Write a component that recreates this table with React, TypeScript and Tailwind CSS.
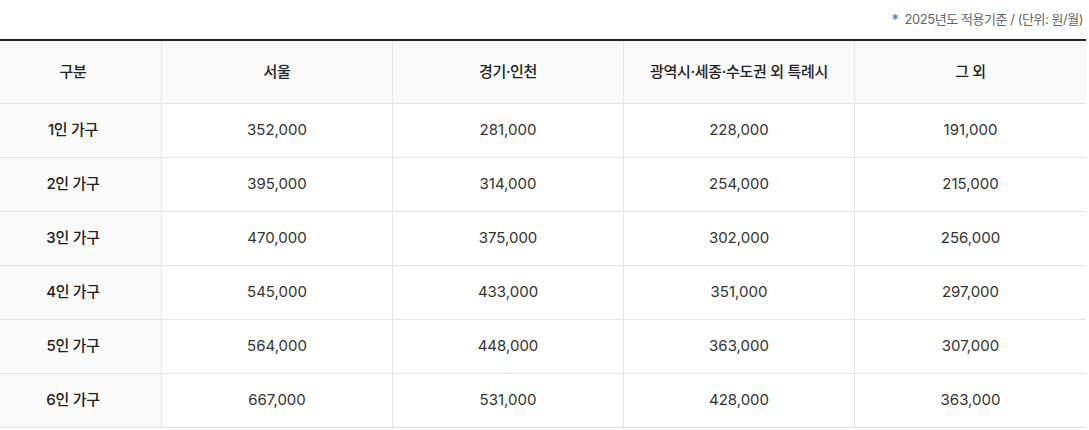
import React from "react";

const rows = [
  ["1인 가구", "352,000", "281,000", "228,000", "191,000"],
  ["2인 가구", "395,000", "314,000", "254,000", "215,000"],
  ["3인 가구", "470,000", "375,000", "302,000", "256,000"],
  ["4인 가구", "545,000", "433,000", "351,000", "297,000"],
  ["5인 가구", "564,000", "448,000", "363,000", "307,000"],
  ["6인 가구", "667,000", "531,000", "428,000", "363,000"],
];

const headers = ["구분", "서울", "경기·인천", "광역시·세종·수도권 외 특례시", "그 외"];

export default function App() {
  return (
    <div
      className="w-[1089px] h-[430px] bg-white overflow-hidden"
      style={{ fontFamily: '"Inter", "Noto Sans CJK KR", sans-serif' }}
    >
      <div className="w-[1086px]">
        <div className="h-[39px] flex items-center justify-end pr-[3px] text-[13px] text-[#666] tracking-[-0.45px]">
          <span className="text-[#4a88e0] mr-[6px] text-[14px] font-bold">*</span>
          <span>2025년도 적용기준 / (단위: 원/월)</span>
        </div>
        <div className="border-t-2 border-[#222]">
          <div className="grid grid-cols-[162px_231px_231px_231px_231px]">
            {headers.map((h, i) => (
              <div
                key={h}
                className={`h-[63px] flex items-center justify-center bg-[#fafafa] border-b border-[#e5e5e5] text-[15px] font-medium text-[#222] tracking-[-0.3px] ${
                  i < 4 ? "border-r" : ""
                } ${i === 0 ? "pr-[15px]" : ""}`}
              >
                {h}
              </div>
            ))}
            {rows.map((r) =>
              r.map((c, i) => (
                <div
                  key={r[0] + i}
                  className={`h-[54px] flex items-center justify-center border-b border-[#e5e5e5] text-[15px] ${
                    i === 0
                      ? "bg-[#fafafa] font-medium text-[#222] tracking-[-0.3px] pr-[15px]"
                      : "bg-white text-[#333]"
                  } ${i < 4 ? "border-r" : ""}`}
                >
                  {c}
                </div>
              ))
            )}
          </div>
        </div>
      </div>
    </div>
  );
}
